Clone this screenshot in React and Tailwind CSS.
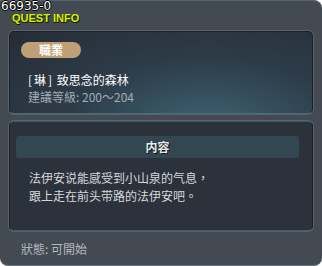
export default function App() {
  const cjk = { fontFamily: '"Noto Sans CJK TC", "Noto Sans CJK SC", "Liberation Sans", sans-serif' };
  return (
    <div className="w-[322px] h-[266px] bg-white">
      <div
        className="relative w-[322px] h-[266px] bg-[#434a52] rounded-tr-[8px] rounded-b-[8px] border-b border-b-[#65717c] border-t border-t-[#59616a] flex flex-col"
        style={cjk}
      >
        <div className="absolute left-[1px] top-[-1px] text-[12px] leading-[12px] text-white [text-shadow:1px_0_0_#000,-1px_0_0_#000,0_1px_0_#000,0_-1px_0_#000]" style={{ fontFamily: '"DejaVu Sans", sans-serif' }}>
          66935-0
        </div>
        <div className="pl-[12px] pt-[11px] h-[30px] text-[11px] leading-[12px] font-bold text-[#d6f000] [text-shadow:1px_1px_0_#1a1f10,0_1px_0_#1a1f10]" style={{ fontFamily: '"Liberation Sans", sans-serif' }}>
          QUEST INFO
        </div>

        <div className="ml-[9px] w-[304px] h-[83px] rounded-[5px] border border-[#1c2129] shadow-[0_0_0_1px_#59626b] bg-[radial-gradient(ellipse_at_65%_115%,#3e6272_0%,#2d3c49_50%,#262c36_100%)] border-b-[#4a6b7c] flex flex-col pl-[11px] pt-[10px]">
          <div className="w-[60px] h-[16px] rounded-full bg-[#bf9f76] flex items-center justify-center text-[12px] font-bold text-white leading-none">
            職業
          </div>
          <div className="pl-[7px] mt-[13px] text-[12px] leading-[17px] text-white">
            <span className="tracking-[2px]">[琳]</span> 致思念的森林
          </div>
          <div className="pl-[7px] mt-[1px] text-[12px] leading-[15px] text-[#a3abb3]">建議等級: 200～204</div>
        </div>

        <div className="ml-[9px] mt-[7px] w-[304px] h-[110px] rounded-[5px] border border-[#1c2129] shadow-[0_0_0_1px_#59626b] bg-[#2c323b] border-t-[#3e5866] border-b-[#4a5a66] flex flex-col pl-[6px] pt-[14px]">
          <div className="w-[283px] h-[22px] rounded-[3px] bg-[#324751] flex items-center justify-center text-[12px] font-bold text-[#e6eaee] [text-shadow:1px_1px_0_#111]">
            内容
          </div>
          <div className="pl-[13px] mt-[11px] text-[12px] leading-[18px] text-[#d4d8dc]">
            <div>法伊安说能感受到小山泉的气息，</div>
            <div>跟上走在前头带路的法伊安吧。</div>
          </div>
        </div>

        <div className="pl-[21px] mt-[10px] text-[12px] leading-[15px] text-[#b4b9be]">狀態: 可開始</div>
      </div>
    </div>
  );
}
